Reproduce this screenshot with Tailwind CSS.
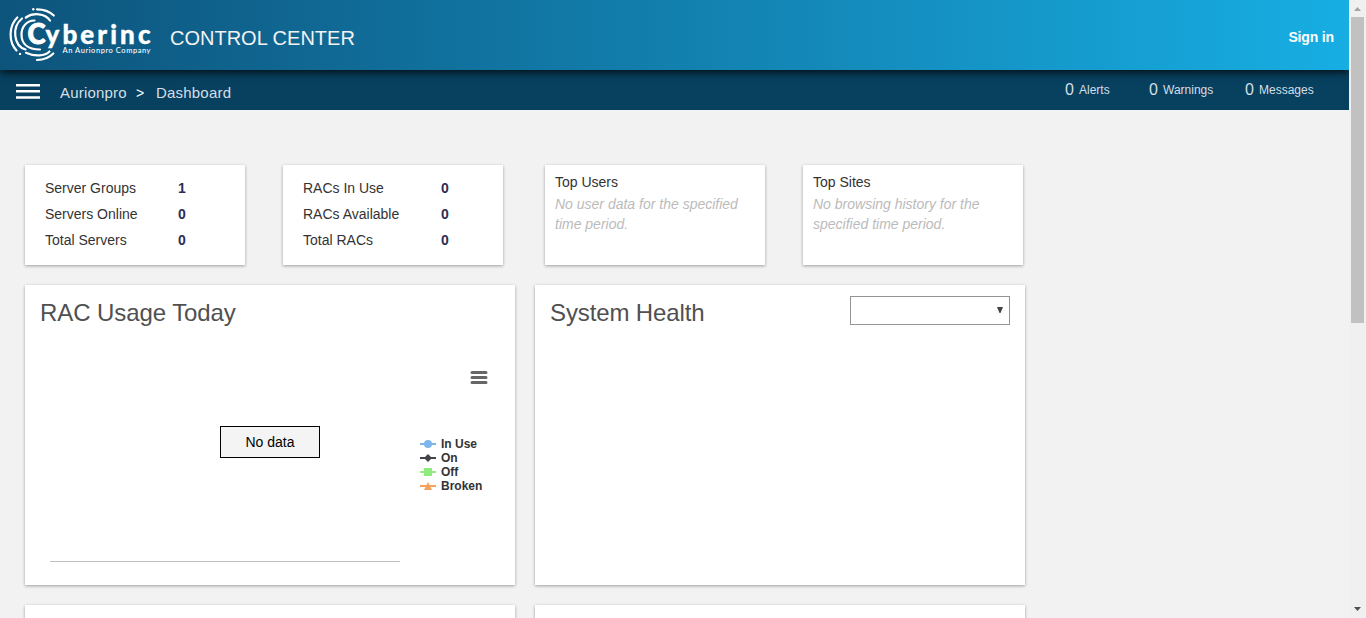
<!DOCTYPE html>
<html lang="en">
<head>
<meta charset="utf-8">
<title>Control Center</title>
<script src="https://cdn.jsdelivr.net/npm/@tailwindcss/browser@4"></script>
</head>
<body class="h-[618px] overflow-hidden bg-[#f2f2f2] font-['Liberation_Sans',Arial,sans-serif] text-sm text-[#333]">
<div class="flex h-[618px] overflow-hidden">
  <div class="w-[1349px] shrink-0 overflow-hidden">
    <header class="relative z-10 flex h-[70px] items-center bg-linear-to-r from-[#0d547c] to-[#17aee3] shadow-[0_2px_8px_rgba(0,0,0,0.85)] [clip-path:inset(0_0_-14px_0)]">
      <svg class="h-[70px] w-[160px]" viewBox="0 0 160 70" fill="none" stroke="#fff" stroke-width="2.200" stroke-linecap="round">
        <path d="M17.300 17.500C8.500 26 8.500 42 16.500 50.500"/>
        <path d="M22 18.500C11.500 27 13.500 46 25.500 49.500"/>
        <path d="M34.500 20.500C26 20.500 21.500 27.500 21.500 34.500C21.500 43 27 49.500 40 49.500"/>
        <path d="M25.800 17.500C33 12.500 45 13 50 20.500"/>
        <path d="M37 9.300C44 9.300 49.500 11.500 53.800 15.500"/>
        <path d="M26 52.800C35 57 45 56 49.500 51.500"/>
        <path d="M37 60C44 59.800 49.500 57.500 53.300 53.500"/>
        <circle cx="33.300" cy="9.300" r="1.200" fill="#fff" stroke="none"/>
        <circle cx="20" cy="53.900" r="1.200" fill="#fff" stroke="none"/>
        <g fill="#fff" font-family="Lato, sans-serif" font-weight="900">
          <text x="27.500" y="44.300" font-size="28" stroke-width=".9" textLength="18" lengthAdjust="spacingAndGlyphs">C</text>
          <text x="45.500" y="43.800" font-size="26" stroke-width=".4" textLength="105" lengthAdjust="spacing">yberinc</text>
          <text x="62.500" y="53" font-size="7.500" font-weight="500" stroke="none" textLength="88" lengthAdjust="spacing">An Aurionpro Company</text>
        </g>
      </svg>
      <h1 class="ml-[10px] pt-[5px] text-xl text-[#f2f2f2]">CONTROL CENTER</h1>
      <a class="mr-[15px] ml-auto pt-1 font-bold tracking-[-0.15px] text-white">Sign in</a>
    </header>
    <nav class="flex h-10 items-center bg-[#08405f] text-[15px] text-[#d5dfe5]">
      <svg class="mt-[3px] ml-4 h-[15px] w-6" viewBox="0 0 24 15" fill="#fff"><path d="M0 0H24V2.400H0ZM0 6.100H24V8.500H0ZM0 12.300H24V14.700H0Z"/></svg>
      <div class="ml-5 flex pt-[5px] tracking-[0.2px]"><span class="w-[76px]">Aurionpro</span><span class="w-5 text-[14px] leading-[22px] text-white">&gt;</span><span>Dashboard</span></div>
      <div class="ml-auto flex pb-px text-xs">
        <div class="flex w-[84px] items-center"><span class="w-[14px] text-base">0</span>Alerts</div>
        <div class="flex w-[96px] items-center"><span class="w-[14px] text-base">0</span>Warnings</div>
        <div class="flex w-[104px] items-center"><span class="w-[14px] text-base">0</span>Messages</div>
      </div>
    </nav>
    <main class="pt-[55px] pl-[25px]">
      <section class="flex h-[100px]">
        <div class="mr-[38px] grid w-[220px] grid-cols-[133px_1fr] content-start bg-white pt-[10px] pl-5 leading-[26px] shadow-[0_1px_3px_rgba(0,0,0,0.35)]">
          <span>Server Groups</span><b class="text-[#2d2d55]">1</b><span>Servers Online</span><b class="text-[#2d2d55]">0</b><span>Total Servers</span><b class="text-[#2d2d55]">0</b>
        </div>
        <div class="mr-[42px] grid w-[220px] grid-cols-[138px_1fr] content-start bg-white pt-[10px] pl-5 leading-[26px] shadow-[0_1px_3px_rgba(0,0,0,0.35)]">
          <span>RACs In Use</span><b class="text-[#2d2d55]">0</b><span>RACs Available</span><b class="text-[#2d2d55]">0</b><span>Total RACs</span><b class="text-[#2d2d55]">0</b>
        </div>
        <div class="mr-[38px] w-[220px] bg-white pt-[7px] pl-[10px] shadow-[0_1px_3px_rgba(0,0,0,0.35)]">
          <h2 class="mb-[2px] leading-5">Top Users</h2>
          <p class="leading-5 text-[#bbb] italic">No user data for the specified<br>time period.</p>
        </div>
        <div class="w-[220px] bg-white pt-[7px] pl-[10px] shadow-[0_1px_3px_rgba(0,0,0,0.35)]">
          <h2 class="mb-[2px] leading-5">Top Sites</h2>
          <p class="leading-5 text-[#bbb] italic">No browsing history for the<br>specified time period.</p>
        </div>
      </section>
      <section class="mt-5 grid grid-cols-[490px_490px] gap-5">
        <div class="h-[300px] bg-white pt-[11px] pl-[15px] shadow-[0_1px_3px_rgba(0,0,0,0.35)]">
          <h2 class="text-2xl leading-[34px] tracking-[-0.08px] text-[#505050]">RAC Usage Today</h2>
          <div class="flex">
            <div class="ml-[10px] flex h-[232px] w-[350px] justify-center border-b border-[#c0c0c0] pt-[96px] pl-[90px]">
              <div class="h-8 w-[100px] border border-black bg-[#f4f4f4] text-center leading-[31px] text-black">No data</div>
            </div>
            <div class="ml-5 pt-[38px]">
              <svg class="ml-[50px] h-5 w-5" viewBox="0 0 20 20" stroke="#666" stroke-width="3" stroke-linecap="round"><path d="M2 4.500H16M2 9.500H16M2 14.500H16"/></svg>
              <ul class="mt-[49px] text-xs leading-[14px] font-bold text-[#333]">
                <li class="flex gap-[5px]"><svg class="h-[14px] w-4" viewBox="0 0 16 14"><path d="M0 7H16" stroke="#7cb5ec" stroke-width="2"/><circle cx="8" cy="7" r="4" fill="#7cb5ec"/></svg>In Use</li>
                <li class="flex gap-[5px]"><svg class="h-[14px] w-4" viewBox="0 0 16 14"><path d="M0 7H16" stroke="#434348" stroke-width="2"/><path d="M8 3L12 7L8 11L4 7Z" fill="#434348"/></svg>On</li>
                <li class="flex gap-[5px]"><svg class="h-[14px] w-4" viewBox="0 0 16 14"><path d="M0 7H16" stroke="#90ed7d" stroke-width="2"/><path d="M4 3H12V11H4Z" fill="#90ed7d"/></svg>Off</li>
                <li class="flex gap-[5px]"><svg class="h-[14px] w-4" viewBox="0 0 16 14"><path d="M0 7H16" stroke="#f7a35c" stroke-width="2"/><path d="M8 3L12 11H4Z" fill="#f7a35c"/></svg>Broken</li>
              </ul>
            </div>
          </div>
        </div>
        <div class="flex h-[300px] items-start justify-between bg-white px-[15px] pt-[11px] shadow-[0_1px_3px_rgba(0,0,0,0.35)]">
          <h2 class="text-2xl leading-[34px] tracking-[-0.12px] text-[#505050]">System Health</h2>
          <div class="flex h-[29px] w-40 items-center justify-end border border-[#949494] pr-[6px] pb-px">
            <svg class="h-[6px] w-[6px]" viewBox="0 0 6 6"><path d="M0 0H6L3.500 6H2.500Z" fill="#444"/></svg>
          </div>
        </div>
        <div class="h-[300px] bg-white shadow-[0_1px_3px_rgba(0,0,0,0.35)]"></div>
        <div class="h-[300px] bg-white shadow-[0_1px_3px_rgba(0,0,0,0.35)]"></div>
      </section>
    </main>
  </div>
  <aside class="flex h-[618px] w-[17px] flex-col items-center bg-[#f0f0f0]">
    <svg class="h-[17px] w-[17px] shrink-0" viewBox="0 0 17 17"><path d="M5 11L8.500 7L12 11Z" fill="#a3a3a3"/></svg>
    <div class="h-[306px] w-[13px] bg-[#c1c1c1]"></div>
    <svg class="mt-auto h-[17px] w-[17px] shrink-0" viewBox="0 0 17 17"><path d="M5 6H12L8.500 10Z" fill="#505050"/></svg>
  </aside>
</div>
</body>
</html>
